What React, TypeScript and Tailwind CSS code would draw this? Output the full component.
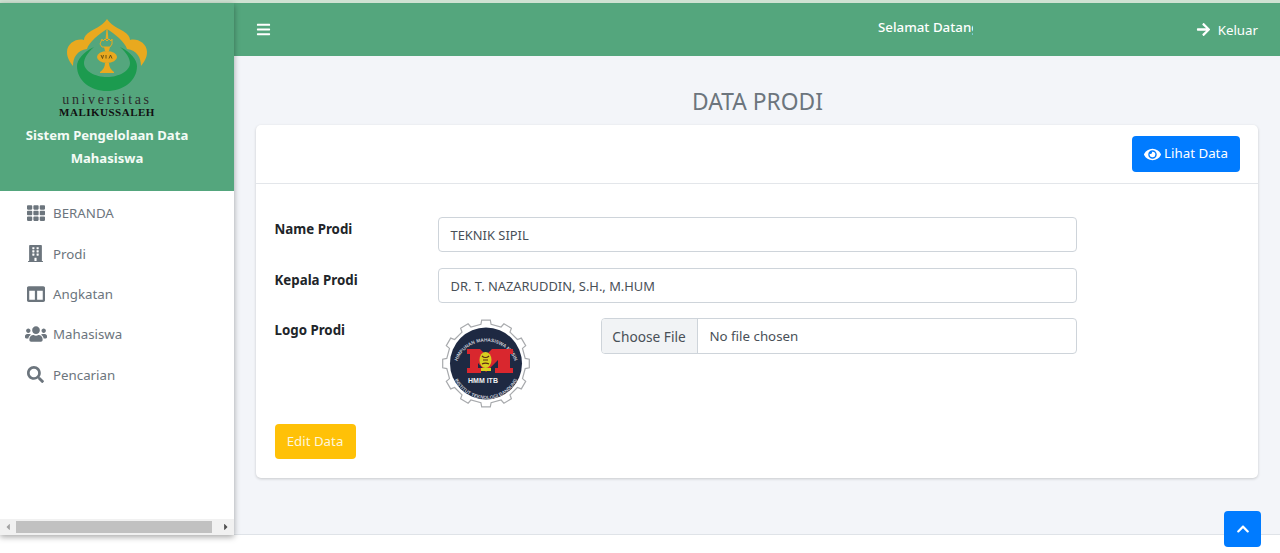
import { FaTh, FaBuilding, FaColumns, FaUsers, FaSearch, FaBars, FaArrowRight, FaEye, FaChevronUp, FaCaretLeft, FaCaretRight } from "react-icons/fa";

const menu = [
  { label: "BERANDA", icon: <FaTh size={18} /> },
  { label: "Prodi", icon: <FaBuilding size={17} /> },
  { label: "Angkatan", icon: <FaColumns size={18} /> },
  { label: "Mahasiswa", icon: <FaUsers size={22} /> },
  { label: "Pencarian", icon: <FaSearch size={17} /> },
];

// 12 teeth round the badge
function gearPath(cx: number, cy: number, outer: number, inner: number) {
  const pts: string[] = [];
  for (let i = 0; i < 12; i++) {
    const a = (i * Math.PI) / 6;
    const w = 0.13;
    const w2 = 0.1;
    const p = (r: number, t: number) => `${(cx + r * Math.sin(t)).toFixed(1)} ${(cy - r * Math.cos(t)).toFixed(1)}`;
    pts.push(p(inner, a - w), p(outer, a - w2), p(outer, a + w2), p(inner, a + w));
  }
  return "M" + pts.join("L") + "Z";
}

function Logo() {
  return (
    <svg width="100" height="78" viewBox="0 0 100 78" className="block">
      <path d="M50 5C53 10 60 14 66 17C71 20 73 23 73 26C80 24 90 29 90 38C90 44 87 48 84 52C84 44 80 36 70 35C68 28 58 20 50 15C42 20 32 28 30 35C20 36 16 44 16 52C13 48 10 44 10 38C10 29 20 24 27 26C27 23 29 20 34 17C40 14 47 10 50 5Z" fill="#e9a91f" />
      <path d="M37 33C26 38 20 46 20 52C20 67 34 77 50 77C66 77 80 67 80 52C80 46 74 38 63 33C70 39 73 45 73 49C73 57 62 63 50 63C38 63 27 57 27 49C27 45 30 39 37 33Z" fill="#1c9b4f" />
      <path d="M49.6 14h.8l1 11h-2.8z" fill="#e9a91f" />
      <path d="M45 25l1 2 2-2 2 2 2-2 2 2 1-2v5l-2 3h-8l-2-3z" fill="#54a67d" stroke="#e9a91f" strokeWidth="1" />
      <path d="M47 33h6l-1 4h-4z" fill="#e9a91f" />
      <ellipse cx="50" cy="43" rx="10" ry="6" fill="#e9a91f" />
      <path d="M48 49h4c0 4 2 7 5 9v1H43v-1c3-2 5-5 5-9z" fill="#e9a91f" />
      <path d="M44 41l1.500 3.500 1-3.500M49 41v3.500M52 44.500l1.500-3.500 1.500 3.500" stroke="#5d4a12" strokeWidth="0.9" fill="none" />
    </svg>
  );
}

function HmmBadge() {
  return (
    <svg width="92" height="92" viewBox="0 0 92 92" className="block">
      <defs>
        <path id="arcTop" d="M15.500 50A30.800 30.800 0 0 1 76.500 50" />
        <path id="arcBottom" d="M11.500 52A35 35 0 0 0 80.500 52" />
      </defs>
      <path d={gearPath(46, 45.5, 43.5, 39.5)} fill="#fff" stroke="#a8aaad" strokeWidth="1.2" />
      <circle cx="46" cy="45.500" r="36" fill="#1e2942" />
      <text fontSize="4.800" fontWeight="700" fill="#c9cdd6" fontFamily="'Liberation Sans',sans-serif">
        <textPath href="#arcTop" startOffset="50%" textAnchor="middle">HIMPUNAN MAHASISWA MESIN</textPath>
      </text>
      <text fontSize="4.800" fontWeight="700" fill="#c9cdd6" fontFamily="'Liberation Sans',sans-serif">
        <textPath href="#arcBottom" startOffset="50%" textAnchor="middle">INSTITUT TEKNOLOGI BANDUNG</textPath>
      </text>
      <path d="M27 31H40L46 37L52 31H73V36H70V50H73V55H55V50H58V42L46 54L38 45V50H41V55H27V50H30V36H27Z" fill="#d9272e" />
      <ellipse cx="45.500" cy="42" rx="6" ry="8" fill="#d8cf20" />
      <path d="M41 50h10v3H41z" fill="#d8cf20" />
      <path d="M42 38c2 2 5 2 7 0M43 42h5M42 46c2-1 5-1 7 0" stroke="#5b2a14" strokeWidth="1.200" fill="none" />
      <text x="43" y="65" textAnchor="middle" fontSize="7" fontWeight="700" fill="#eef0f3" fontFamily="'Liberation Sans',sans-serif">HMM ITB</text>
    </svg>
  );
}

export default function App() {
  return (
    <div className="h-[553px] w-[1280px] overflow-hidden bg-white font-['Noto_Sans',sans-serif] text-[13.3px]">
      <div className="h-[3px] bg-[#cfe2d2]" />
      <div className="flex h-[550px] items-start">
        <aside className="z-10 flex h-[532px] w-[234px] shrink-0 flex-col bg-white shadow-[0_2px_6px_rgba(0,0,0,0.35)]">
          <div className="flex h-[188px] flex-col items-center bg-[#54a67d] pr-[20px] pt-[11px]">
            <Logo />
            <div className="mt-[2px] font-['Liberation_Serif',serif] text-[14px] leading-[12px] tracking-[2.6px] text-[#2c2c2c]">universitas</div>
            <div className="font-['Liberation_Serif',serif] text-[11px] font-bold leading-[12px] tracking-[0.5px] text-[#111]">MALIKUSSALEH</div>
            <div className="mt-[6px] text-center text-[13.1px] font-bold leading-[23px] text-[#f4fbf6]">
              Sistem Pengelolaan Data
              <br />
              Mahasiswa
            </div>
          </div>
          <nav className="flex flex-1 flex-col pt-[2px] text-[#6c757d]">
            {menu.map((m) => (
              <div key={m.label} className="flex h-[40.4px] items-center">
                <span className="flex w-[53px] justify-center pl-[18px]">{m.icon}</span>
                <span className="pt-[2px]">{m.label}</span>
              </div>
            ))}
          </nav>
          <div className="flex h-[16px] items-center bg-[#f1f1f1]">
            <span className="flex w-[16px] justify-center text-[#a3a3a3]"><FaCaretLeft size={10} /></span>
            <div className="h-[12px] w-[196px] bg-[#c1c1c1]" />
            <span className="ml-auto flex w-[16px] justify-center text-[#505050]"><FaCaretRight size={10} /></span>
          </div>
        </aside>
        <div className="flex h-[550px] min-w-0 flex-1 flex-col">
          <header className="flex h-[53px] shrink-0 items-center bg-[#54a67d] pl-[22px] pr-[22px] text-white">
            <FaBars size={15} />
            <div className="mb-[3px] ml-[607px] w-[95px] overflow-hidden whitespace-nowrap font-medium">Selamat Datang di Sistem</div>
            <div className="ml-auto flex items-center gap-[7px]">
              <FaArrowRight size={15} />
              <span className="pt-[2px]">Keluar</span>
            </div>
          </header>
          <main className="flex h-[479px] shrink-0 flex-col border-b border-[#dfe3e8] bg-[#f3f5f9] pl-[22px] pr-[21px]">
            <h1 className="mt-[30px] text-center text-[22.800px] leading-[32px] text-[#6c757d]">DATA PRODI</h1>
            <section className="mr-[1px] mt-[7px] h-[353px] rounded-[5px] bg-white shadow-[0_1px_3px_rgba(0,0,0,0.18)]">
              <div className="flex h-[59px] items-center justify-end border-b border-[#e3e6ea] pr-[18px]">
                <button className="flex h-[36px] w-[108px] items-center justify-center gap-[3px] rounded-[4px] bg-[#007bff] text-white">
                  <FaEye size={17} />
                  <span>Lihat Data</span>
                </button>
              </div>
              <div className="pl-[18.500px] pt-[33px]">
                <div className="flex h-[35px] items-start">
                  <label className="w-[163px] pt-[3px] font-bold text-[#212529]">Name Prodi</label>
                  <div className="flex h-[35px] w-[639px] items-center rounded-[4px] border border-[#ced4da] pl-[12px] pt-[2px] text-[12.900px] text-[#495057]">TEKNIK SIPIL</div>
                </div>
                <div className="mt-[16px] flex h-[35px] items-start">
                  <label className="w-[163px] pt-[3px] font-bold text-[#212529]">Kepala Prodi</label>
                  <div className="flex h-[35px] w-[639px] items-center rounded-[4px] border border-[#ced4da] pl-[12px] pt-[2px] text-[12.900px] text-[#495057]">DR. T. NAZARUDDIN, S.H., M.HUM</div>
                </div>
                <div className="mt-[15px] flex h-[91px] items-start">
                  <label className="w-[163px] pt-[3px] font-bold text-[#212529]">Logo Prodi</label>
                  <div className="w-[163px] pl-[2.500px]"><HmmBadge /></div>
                  <div className="flex h-[36px] w-[476px] items-center overflow-hidden rounded-[4px] border border-[#ced4da] text-[#495057]">
                    <span className="flex h-full w-[96px] items-center justify-center border-r border-[#ced4da] bg-[#f1f3f5] pt-[2px] text-[13.700px]">Choose File</span>
                    <span className="pl-[12px] pt-[2px]">No file chosen</span>
                  </div>
                </div>
                <button className="mt-[15px] h-[35px] w-[81px] rounded-[4px] bg-[#ffc107] pt-[1px] text-[#fdf6dd]">Edit Data</button>
              </div>
            </section>
          </main>
          <footer className="relative flex-1 bg-white">
            <button className="absolute right-[19px] top-[-24px] flex h-[36px] w-[37px] items-center justify-center rounded-[4px] bg-[#007bff] text-white">
              <FaChevronUp size={14} />
            </button>
          </footer>
        </div>
      </div>
    </div>
  );
}
